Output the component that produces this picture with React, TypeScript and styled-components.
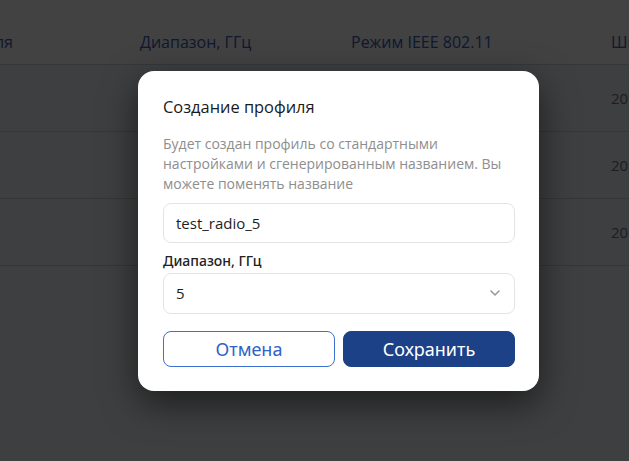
import React from "react";
import styled, { createGlobalStyle } from "styled-components";

const GlobalStyle = createGlobalStyle`
  html, body {
    margin: 0;
    padding: 0;
    width: 629px;
    height: 461px;
    overflow: hidden;
    background: #ffffff;
    font-family: "Open Sans", "Noto Sans", sans-serif;
  }
  * { box-sizing: border-box; }
`;

interface IProfileRow {
    name: string,
    band: string,
    mode: string,
    width: string
}

const rows: IProfileRow[] = [
    { name: 'test_radio_1', band: '2.4', mode: '802.11n', width: '20' },
    { name: 'test_radio_2', band: '5', mode: '802.11ac', width: '20' },
    { name: 'test_radio_3', band: '5', mode: '802.11ax', width: '20' },
];

const Page = styled.div`
  position: relative;
  width: 629px;
  height: 461px;
  overflow: hidden;
  background: #eef1f8;
`;

const Table = styled.div`
  margin-left: -136px;
  display: grid;
  grid-template-columns: 276px 211px 260px 220px;
`;

const HeadCell = styled.div`
  height: 65px;
  display: flex;
  align-items: flex-end;
  padding-bottom: 11px;
  background: #ffffff;
  border-bottom: 1px solid #d2d5da;
  color: #3c62b8;
  font-size: 16px;
  line-height: 22px;
  white-space: nowrap;
`;

const Cell = styled.div`
  height: 67px;
  display: flex;
  align-items: center;
  border-bottom: 1px solid #cdd0d5;
  color: #74767e;
  font-size: 15px;
  white-space: nowrap;
`;

const Overlay = styled.div`
  position: absolute;
  inset: 0;
  background: rgba(0, 0, 0, 0.74);
  display: flex;
  align-items: center;
  justify-content: center;
  padding-left: 48px;
`;

const Modal = styled.div`
  width: 401px;
  background: #ffffff;
  border-radius: 16px;
  padding: 25px 24px 24px 25px;
  box-shadow: 0 12px 36px rgba(0, 0, 0, 0.55);
  display: flex;
  flex-direction: column;
`;

const Title = styled.h2`
  margin: 0;
  font-size: 16.4px;
  line-height: 22px;
  font-weight: 400;
  color: #1a1a1a;
`;

const Description = styled.p`
  margin: 16px 0 0;
  font-size: 14px;
  line-height: 20px;
  color: #8e8e8e;
`;

const NameInput = styled.input`
  margin-top: 9px;
  width: 100%;
  height: 40px;
  padding: 0 12px;
  border: 1px solid #e4e4e4;
  border-radius: 8px;
  font-family: "Open Sans", "Noto Sans", sans-serif;
  font-size: 15px;
  color: #1e1e1e;
  outline: none;
`;

const Label = styled.label`
  margin-top: 8px;
  font-family: "Noto Sans", "Open Sans", sans-serif;
  font-size: 14px;
  line-height: 20px;
  font-weight: 500;
  color: #222222;
`;

const SelectBox = styled.div`
  margin-top: 2px;
  width: 100%;
  height: 41px;
  padding: 0 14px 0 12px;
  border: 1px solid #e4e4e4;
  border-radius: 8px;
  display: flex;
  align-items: center;
  justify-content: space-between;
  font-size: 15px;
  color: #1e1e1e;
`;

const Actions = styled.div`
  margin-top: 17px;
  display: grid;
  grid-template-columns: 1fr 1fr;
  gap: 8px;
`;

const Button = styled.button<{ $primary?: boolean }>`
  height: 36px;
  padding: 0;
  border-radius: 8px;
  font-family: "Noto Sans", "Open Sans", sans-serif;
  font-size: 18px;
  cursor: pointer;
  border: 1px solid ${p => p.$primary ? '#1c4187' : '#3b6fd1'};
  background: ${p => p.$primary ? '#1c4187' : '#ffffff'};
  color: ${p => p.$primary ? '#ffffff' : '#2f62c8'};
`;

const Chevron = () => (
    <svg width="10" height="6" viewBox="0 0 10 6" fill="none">
        <path d="M1 1l4 4 4-4" stroke="#9a9a9a" strokeWidth="1.6" strokeLinecap="round" strokeLinejoin="round" />
    </svg>
);

const App = () => {
    return (
        <Page>
            <GlobalStyle />
            <Table>
                <HeadCell>Название профиля</HeadCell>
                <HeadCell>Диапазон, ГГц</HeadCell>
                <HeadCell>Режим IEEE 802.11</HeadCell>
                <HeadCell>Ширина канала, МГц</HeadCell>
                {rows.map(r => (
                    <React.Fragment key={r.name}>
                        <Cell>{r.name}</Cell>
                        <Cell>{r.band}</Cell>
                        <Cell>{r.mode}</Cell>
                        <Cell>{r.width}</Cell>
                    </React.Fragment>
                ))}
            </Table>

            <Overlay>
                <Modal>
                    <Title>Создание профиля</Title>
                    <Description>
                        Будет создан профиль со стандартными настройками и сгенерированным названием. Вы можете поменять название
                    </Description>
                    <NameInput defaultValue="test_radio_5" />
                    <Label>Диапазон, ГГц</Label>
                    <SelectBox>
                        <span>5</span>
                        <Chevron />
                    </SelectBox>
                    <Actions>
                        <Button>Отмена</Button>
                        <Button $primary>Сохранить</Button>
                    </Actions>
                </Modal>
            </Overlay>
        </Page>
    )
}

export default App;
